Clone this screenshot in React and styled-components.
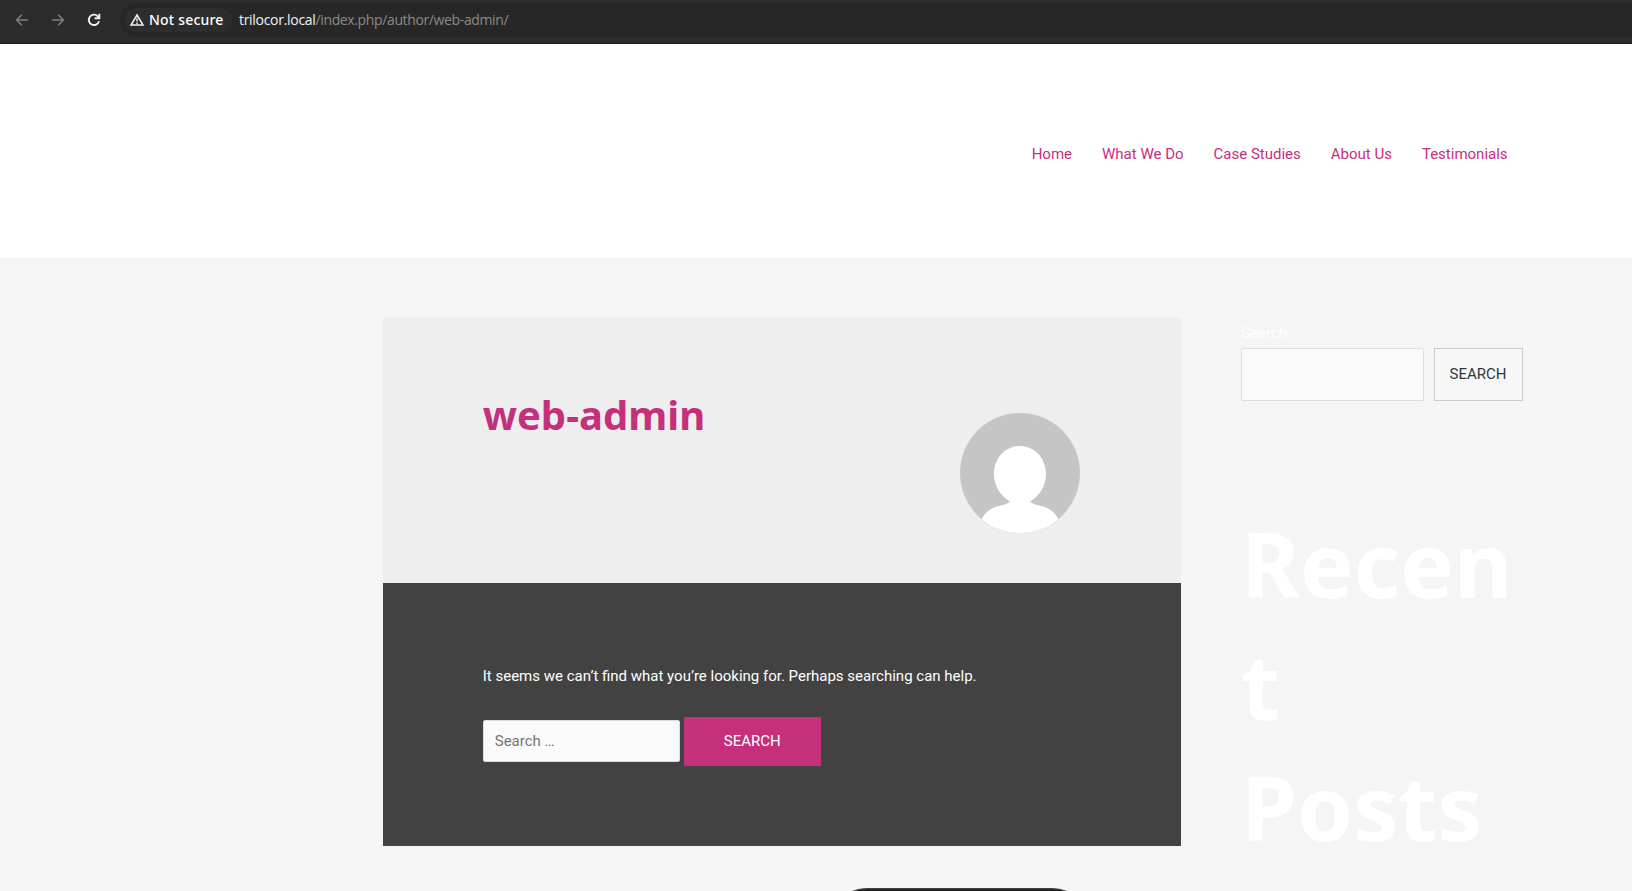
import React from "react";
import styled, { createGlobalStyle } from "styled-components";

const GlobalStyle = createGlobalStyle`
  *, *::before, *::after { box-sizing: border-box; }
  html, body { margin: 0; padding: 0; overflow: hidden; }
  body {
    background: #f5f5f5;
    font-family: Roboto, "Liberation Sans", sans-serif;
    font-size: 15px;
    color: #fff;
  }
  button, input { font: inherit; margin: 0; outline: none; }
`;

const Page = styled.div`
  height: 891px;
  overflow: hidden;
`;

const BrowserBar = styled.div`
  display: flex;
  align-items: flex-start;
  height: 44px;
  padding: 3px 0 0 13px;
  background: #2c2c2c;
  border-bottom: 1px solid #191719;
`;

const BrowserButton = styled.span`
  display: flex;
  align-items: center;
  justify-content: center;
  width: 18px;
  height: 34px;
  margin-right: 18px;
  color: ${(p) => (p.$active ? "#f2f2f2" : "#7e7e7e")};
`;

const AddressBar = styled.div`
  display: flex;
  align-items: center;
  flex: 1;
  height: 34px;
  margin-left: -1px;
  padding-left: 5px;
  border-radius: 17px 0 0 17px;
  background: #272727;
  font-family: "Noto Sans", sans-serif;
`;

const SecurityChip = styled.div`
  display: flex;
  align-items: center;
  gap: 4px;
  width: 107px;
  height: 24px;
  padding-left: 4px;
  border-radius: 12px;
  background: #2d2d2d;
  font-size: 14px;
  font-weight: 500;
  letter-spacing: 0.2px;
  white-space: nowrap;
`;

const ChipText = styled.span`
  padding-bottom: 2px;
`;

const Url = styled.div`
  margin-left: 7px;
  padding-bottom: 2px;
  color: #8b8b86;
  font-family: "Open Sans", sans-serif;
  font-size: 14px;
  letter-spacing: -0.37px;
  white-space: nowrap;
`;

const Host = styled.span`
  color: #f3f3f3;
  letter-spacing: -0.3px;
`;

const SiteHeader = styled.header`
  display: flex;
  align-items: center;
  justify-content: flex-end;
  height: 214px;
  padding: 5px 124.4px 0 0;
  background: #fff;
`;

const Nav = styled.nav`
  display: flex;
  gap: 30px;
`;

const NavLink = styled.a`
  color: #c4307c;
  line-height: 24px;
`;

const Content = styled.main`
  display: flex;
  align-items: flex-start;
  gap: 60px;
  padding: 60px 0 0 383px;
`;

const Primary = styled.section`
  width: 798px;
`;

const AuthorBox = styled.div`
  display: flex;
  align-items: flex-start;
  justify-content: space-between;
  height: 265px;
  padding: 71px 101px 0 99.75px;
  background: #eee;
`;

const AuthorName = styled.h1`
  margin: 0;
  color: #c4307c;
  font: 700 40px/52px "Noto Sans", sans-serif;
`;

const Avatar = styled.svg`
  width: 120px;
  height: 120px;
  margin-top: 24px;
  border-radius: 50%;
`;

const NoResults = styled.div`
  height: 263px;
  padding: 81px 99px 0 99.75px;
  background: #424242;
`;

const Message = styled.p`
  margin: 0 0 29px;
  line-height: 24px;
`;

const SearchForm = styled.form`
  display: flex;
  align-items: flex-start;
  gap: 4px;
`;

const SearchInput = styled.input`
  width: 197px;
  height: 42px;
  margin-top: 3px;
  padding: 0 11px;
  border: 1px solid #ddd;
  border-radius: 2px;
  background: #fafafa;
  color: #666;
  &::placeholder { color: #757575; opacity: 1; }
`;

const SubmitButton = styled.button`
  width: 137px;
  height: 49px;
  padding: 0 0 1px;
  border: 0;
  background: #c4307c;
  color: #fff;
`;

const Sidebar = styled.aside`
  width: 282px;
`;

const SearchLabel = styled.label`
  display: block;
  padding-top: 3px;
  line-height: 24px;
  margin-bottom: 3px;
`;

const SidebarForm = styled.form`
  display: flex;
  gap: 10px;
`;

const SidebarInput = styled(SearchInput)`
  width: 183px;
  height: 53px;
  margin-top: 0;
`;

const SidebarButton = styled.button`
  width: 89px;
  height: 53px;
  padding: 0 1px 2px 0;
  border: 1px solid #ccc;
  background: #f7f7f7;
  color: #32373c;
`;

const WidgetTitle = styled.h2`
  width: 282px;
  margin: 102px 0 0;
  font: 700 90px/121.5px "Noto Sans", sans-serif;
  overflow-wrap: anywhere;
`;

const BottomPill = styled.div`
  position: fixed;
  top: 888px;
  left: 827px;
  width: 265px;
  height: 80px;
  border: 1px solid #454545;
  border-radius: 40px;
  background: #222324;
`;

const links = ["Home", "What We Do", "Case Studies", "About Us", "Testimonials"];

const Arrow = ({ flip }) => (
  <svg width="14" height="14" viewBox="0 0 14 14" fill="none" stroke="currentColor" strokeWidth="1.6">
    <path d={flip ? "M1 7H12M7.2 1.8L12.4 7L7.2 12.2" : "M13 7H2M6.8 1.8L1.6 7L6.8 12.2"} />
  </svg>
);

const Reload = () => (
  <svg width="14" height="14" viewBox="0 0 14 14" fill="none" stroke="currentColor" strokeWidth="1.9">
    <path d="M12 8.2A5.2 5.2 0 1 1 10.8 3.3L12 4.5" />
    <path d="M12.3 .8V5.3H7.6" />
  </svg>
);

const Warning = () => (
  <svg width="16" height="14" viewBox="0 0 16 14" fill="none" stroke="#f2f2f2">
    <path d="M8 2L14 12.1H2Z" strokeWidth="1.5" />
    <path d="M8 5.3V8.6M8 9.5V11" strokeWidth="1.4" />
  </svg>
);

export default function App() {
  return (
    <Page>
      <GlobalStyle />
      <BrowserBar>
        <BrowserButton><Arrow /></BrowserButton>
        <BrowserButton><Arrow flip /></BrowserButton>
        <BrowserButton $active><Reload /></BrowserButton>
        <AddressBar>
          <SecurityChip><Warning /><ChipText>Not secure</ChipText></SecurityChip>
          <Url><Host>trilocor.local</Host>/index.php/author/web-admin/</Url>
        </AddressBar>
      </BrowserBar>
      <SiteHeader>
        <Nav>{links.map((l) => <NavLink key={l}>{l}</NavLink>)}</Nav>
      </SiteHeader>
      <Content>
        <Primary>
          <AuthorBox>
            <AuthorName>web-admin</AuthorName>
            <Avatar viewBox="0 0 120 120">
              <rect width="120" height="120" fill="#c5c5c5" />
              <path
                fill="#fff"
                d="M60 33C74.500 33 86 45 86 61C86 73 79.500 83 70 88.500C73 91 75.500 92 79 92.500C88 94 94 98 98.500 106V120H21.500V106C26 98 32 94 41 92.500C44.500 92 47 91 50 88.500C40.500 83 34 73 34 61C34 45 45.500 33 60 33Z"
              />
            </Avatar>
          </AuthorBox>
          <NoResults>
            <Message>It seems we can’t find what you’re looking for. Perhaps searching can help.</Message>
            <SearchForm>
              <SearchInput placeholder="Search …" />
              <SubmitButton type="button">SEARCH</SubmitButton>
            </SearchForm>
          </NoResults>
        </Primary>
        <Sidebar>
          <SearchLabel htmlFor="site-search">Search</SearchLabel>
          <SidebarForm>
            <SidebarInput id="site-search" />
            <SidebarButton type="button">SEARCH</SidebarButton>
          </SidebarForm>
          <WidgetTitle>Recent Posts</WidgetTitle>
        </Sidebar>
      </Content>
      <BottomPill />
    </Page>
  );
}
